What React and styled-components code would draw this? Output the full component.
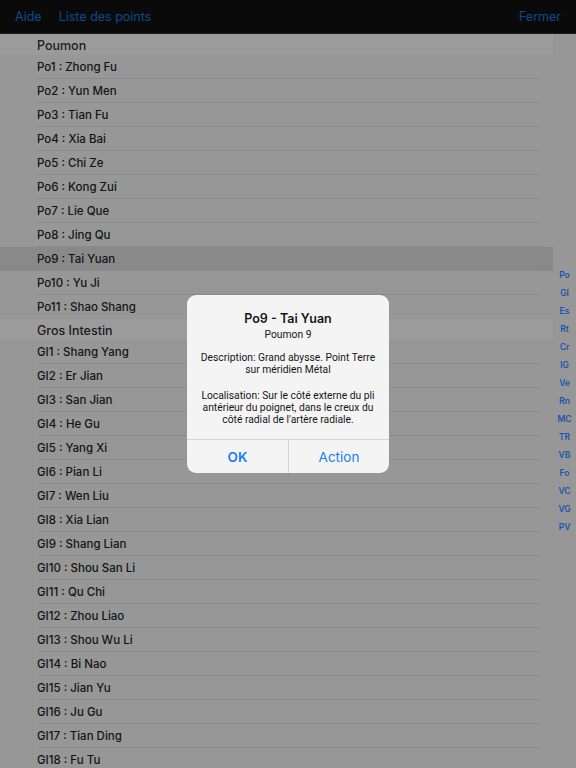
import React from "react";
import styled, { createGlobalStyle } from "styled-components";

const GlobalStyle = createGlobalStyle`
  html, body {
    margin: 0;
    padding: 0;
    height: 768px;
    overflow: hidden;
    background: #979797;
    font-family: "Inter", "Liberation Sans", sans-serif;
  }
`;

const Page = styled.div`
  display: flex;
  flex-direction: column;
  height: 768px;
  overflow: hidden;
`;

const NavBar = styled.header`
  display: flex;
  align-items: center;
  height: 33px;
  padding: 0 15px;
  background: #0a0a0a;
  border-bottom: 1px solid #1e1e1e;
  flex-shrink: 0;
`;

const NavLink = styled.a`
  font-size: 12.5px;
  color: #0b4a8e;
  text-decoration: none;
  margin-right: ${(p) => (p.$gap ? p.$gap : "0")};
  margin-left: ${(p) => (p.$right ? "auto" : "0")};
`;

const Body = styled.div`
  display: flex;
  flex: 1;
  min-height: 0;
`;

const List = styled.div`
  width: 553px;
  flex-shrink: 0;
  display: flex;
  flex-direction: column;
`;

const SectionHeader = styled.div`
  height: 21px;
  display: flex;
  align-items: center;
  padding: 1px 0 0 37px;
  box-sizing: border-box;
  background: #9b9b9b;
  color: #1c1c1c;
  font-size: 12.5px;
  font-weight: 500;
  flex-shrink: 0;
`;

const Row = styled.div`
  display: flex;
  height: 24px;
  flex-shrink: 0;
  padding-left: 37px;
  background: ${(p) => (p.$selected ? "#898989" : "#979797")};
`;

const RowLabel = styled.div`
  flex: 1;
  margin-right: 13px;
  display: flex;
  align-items: center;
  box-sizing: border-box;
  padding-top: 1px;
  border-bottom: 1px solid ${(p) => (p.$last ? "transparent" : "#8a8a8a")};
  color: #141414;
  font-size: 11.5px;
  font-weight: 500;
`;

const IndexBar = styled.nav`
  flex: 1;
  display: flex;
  flex-direction: column;
  align-items: center;
  justify-content: center;
  padding-bottom: 1px;
`;

const IndexItem = styled.span`
  height: 18px;
  line-height: 18px;
  font-size: 8.5px;
  font-weight: 600;
  color: #1a55ad;
`;

const Alert = styled.div`
  position: absolute;
  left: 187px;
  top: 295px;
  width: 202px;
  background: #f4f4f4;
  border-radius: 9px;
  overflow: hidden;
  text-align: center;
  color: #161616;
`;

const AlertContent = styled.div`
  padding: 15px 8px 13px;
`;

const AlertTitle = styled.div`
  font-size: 12.5px;
  line-height: 18px;
  font-weight: 600;
`;

const AlertSub = styled.div`
  font-family: "Roboto", "Liberation Sans", sans-serif;
  font-size: 10.3px;
  line-height: 13px;
`;

const AlertText = styled.p`
  margin: ${(p) => p.$mt}px 0 0;
  font-family: "Roboto", "Liberation Sans", sans-serif;
  font-size: 10.3px;
  line-height: 12px;
`;

const AlertButtons = styled.div`
  display: grid;
  grid-template-columns: 1fr 1fr;
  border-top: 1px solid #d4d4d4;
  height: 33px;
`;

const AlertButton = styled.button`
  border: none;
  background: transparent;
  font-family: inherit;
  font-size: 13.5px;
  font-weight: ${(p) => (p.$bold ? 600 : 400)};
  color: #157ef5;
  padding: 0;
  & + & {
    border-left: 1px solid #d4d4d4;
  }
`;

const sections = [
  {
    title: "Poumon",
    rows: [
      "Po1 : Zhong Fu",
      "Po2 : Yun Men",
      "Po3 : Tian Fu",
      "Po4 : Xia Bai",
      "Po5 : Chi Ze",
      "Po6 : Kong Zui",
      "Po7 : Lie Que",
      "Po8 : Jing Qu",
      "Po9 : Tai Yuan",
      "Po10 : Yu Ji",
      "Po11 : Shao Shang",
    ],
  },
  {
    title: "Gros Intestin",
    rows: [
      "GI1 : Shang Yang",
      "GI2 : Er Jian",
      "GI3 : San Jian",
      "GI4 : He Gu",
      "GI5 : Yang Xi",
      "GI6 : Pian Li",
      "GI7 : Wen Liu",
      "GI8 : Xia Lian",
      "GI9 : Shang Lian",
      "GI10 : Shou San Li",
      "GI11 : Qu Chi",
      "GI12 : Zhou Liao",
      "GI13 : Shou Wu Li",
      "GI14 : Bi Nao",
      "GI15 : Jian Yu",
      "GI16 : Ju Gu",
      "GI17 : Tian Ding",
      "GI18 : Fu Tu",
    ],
  },
];

const index = ["Po", "GI", "Es", "Rt", "Cr", "IG", "Ve", "Rn", "MC", "TR", "VB", "Fo", "VC", "VG", "PV"];

const App = () => {
  return (
    <Page>
      <GlobalStyle />
      <NavBar>
        <NavLink href="#" $gap="17px">Aide</NavLink>
        <NavLink href="#">Liste des points</NavLink>
        <NavLink href="#" $right>Fermer</NavLink>
      </NavBar>
      <Body>
        <List>
          {sections.map((s) => (
            <React.Fragment key={s.title}>
              <SectionHeader>{s.title}</SectionHeader>
              {s.rows.map((r, i) => (
                <Row key={r} $selected={r === "Po9 : Tai Yuan"}>
                  <RowLabel $last={i === s.rows.length - 1}>{r}</RowLabel>
                </Row>
              ))}
            </React.Fragment>
          ))}
        </List>
        <IndexBar>
          {index.map((k) => (
            <IndexItem key={k}>{k}</IndexItem>
          ))}
        </IndexBar>
      </Body>
      <Alert>
        <AlertContent>
          <AlertTitle>Po9 - Tai Yuan</AlertTitle>
          <AlertSub>Poumon 9</AlertSub>
          <AlertText $mt={11}>Description: Grand abysse. Point Terre sur méridien Métal</AlertText>
          <AlertText $mt={14}>
            Localisation: Sur le côté externe du pli antérieur du poignet, dans le creux du côté radial de l'artère radiale.
          </AlertText>
        </AlertContent>
        <AlertButtons>
          <AlertButton $bold>OK</AlertButton>
          <AlertButton>Action</AlertButton>
        </AlertButtons>
      </Alert>
    </Page>
  );
};

export default App;
